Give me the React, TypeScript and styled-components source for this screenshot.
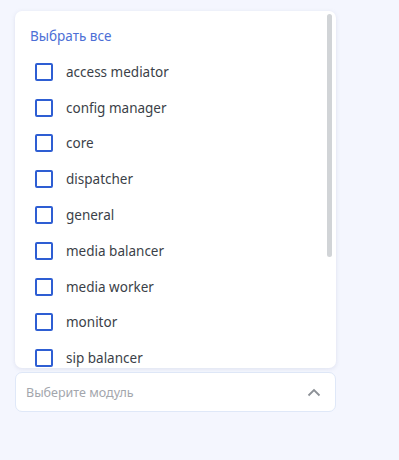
import React, { useState } from "react";
import styled, { createGlobalStyle } from "styled-components";

const GlobalStyle = createGlobalStyle`
  html, body {
    margin: 0;
    padding: 0;
    background: #f4f6fe;
    font-family: "Noto Sans", "Open Sans", sans-serif;
  }
`;

const Page = styled.div`
  width: 399px;
  height: 460px;
  padding: 11px 0 0 15px;
  box-sizing: border-box;
`;

const Column = styled.div`
  width: 321px;
  display: flex;
  flex-direction: column;
  gap: 4px;
`;

const Menu = styled.div`
  position: relative;
  height: 357px;
  background: #ffffff;
  border-radius: 7px;
  box-shadow: 0 1px 4px rgba(120, 135, 170, 0.18);
  overflow: hidden;
`;

const Scroll = styled.div`
  height: 100%;
  overflow-y: auto;
  scrollbar-width: none;
  &::-webkit-scrollbar {
    display: none;
  }
`;

const Thumb = styled.div`
  position: absolute;
  top: 3px;
  right: 4px;
  width: 5px;
  height: 243px;
  border-radius: 3px;
  background: #d1d4d7;
`;

const SelectAll = styled.div`
  padding: 16px 15px 8px;
  line-height: 19px;
  font-size: 13.5px;
  color: #4c6fd6;
  cursor: pointer;
`;

const Option = styled.label`
  height: 35.8px;
  display: flex;
  align-items: center;
  gap: 13px;
  padding-left: 20px;
  font-size: 13.5px;
  color: #3b3f48;
  cursor: pointer;
`;

const Box = styled.span<{ $checked: boolean }>`
  width: 18px;
  height: 18px;
  box-sizing: border-box;
  border: 2px solid #2e5ed3;
  border-radius: 2px;
  background: ${(p) => (p.$checked ? "#2e5ed3" : "#fff")};
  flex-shrink: 0;
`;

const Field = styled.div`
  height: 40px;
  box-sizing: border-box;
  background: #ffffff;
  border: 1px solid #dfe8f8;
  border-radius: 7px;
  display: flex;
  align-items: center;
  justify-content: space-between;
  padding: 0 14px 0 10px;
`;

const Placeholder = styled.span`
  font-size: 12.5px;
  color: #a3a6ad;
`;

const modules = [
  "access mediator",
  "config manager",
  "core",
  "dispatcher",
  "general",
  "media balancer",
  "media worker",
  "monitor",
  "sip balancer",
];

export default function App() {
  const [checked, setChecked] = useState<string[]>([]);
  const toggle = (m: string) =>
    setChecked((c) => (c.includes(m) ? c.filter((x) => x !== m) : [...c, m]));

  return (
    <>
      <GlobalStyle />
      <Page>
        <Column>
          <Menu>
            <Scroll>
              <SelectAll onClick={() => setChecked(modules)}>Выбрать все</SelectAll>
              {modules.map((m) => (
                <Option key={m} onClick={() => toggle(m)}>
                  <Box $checked={checked.includes(m)} />
                  {m}
                </Option>
              ))}
            </Scroll>
            <Thumb />
          </Menu>
          <Field>
            <Placeholder>Выберите модуль</Placeholder>
            <svg width="14" height="9" viewBox="0 0 14 9" fill="none">
              <path d="M1.5 7.5 L7 2 L12.5 7.5" stroke="#8c9096" strokeWidth="1.8" />
            </svg>
          </Field>
        </Column>
      </Page>
    </>
  );
}
